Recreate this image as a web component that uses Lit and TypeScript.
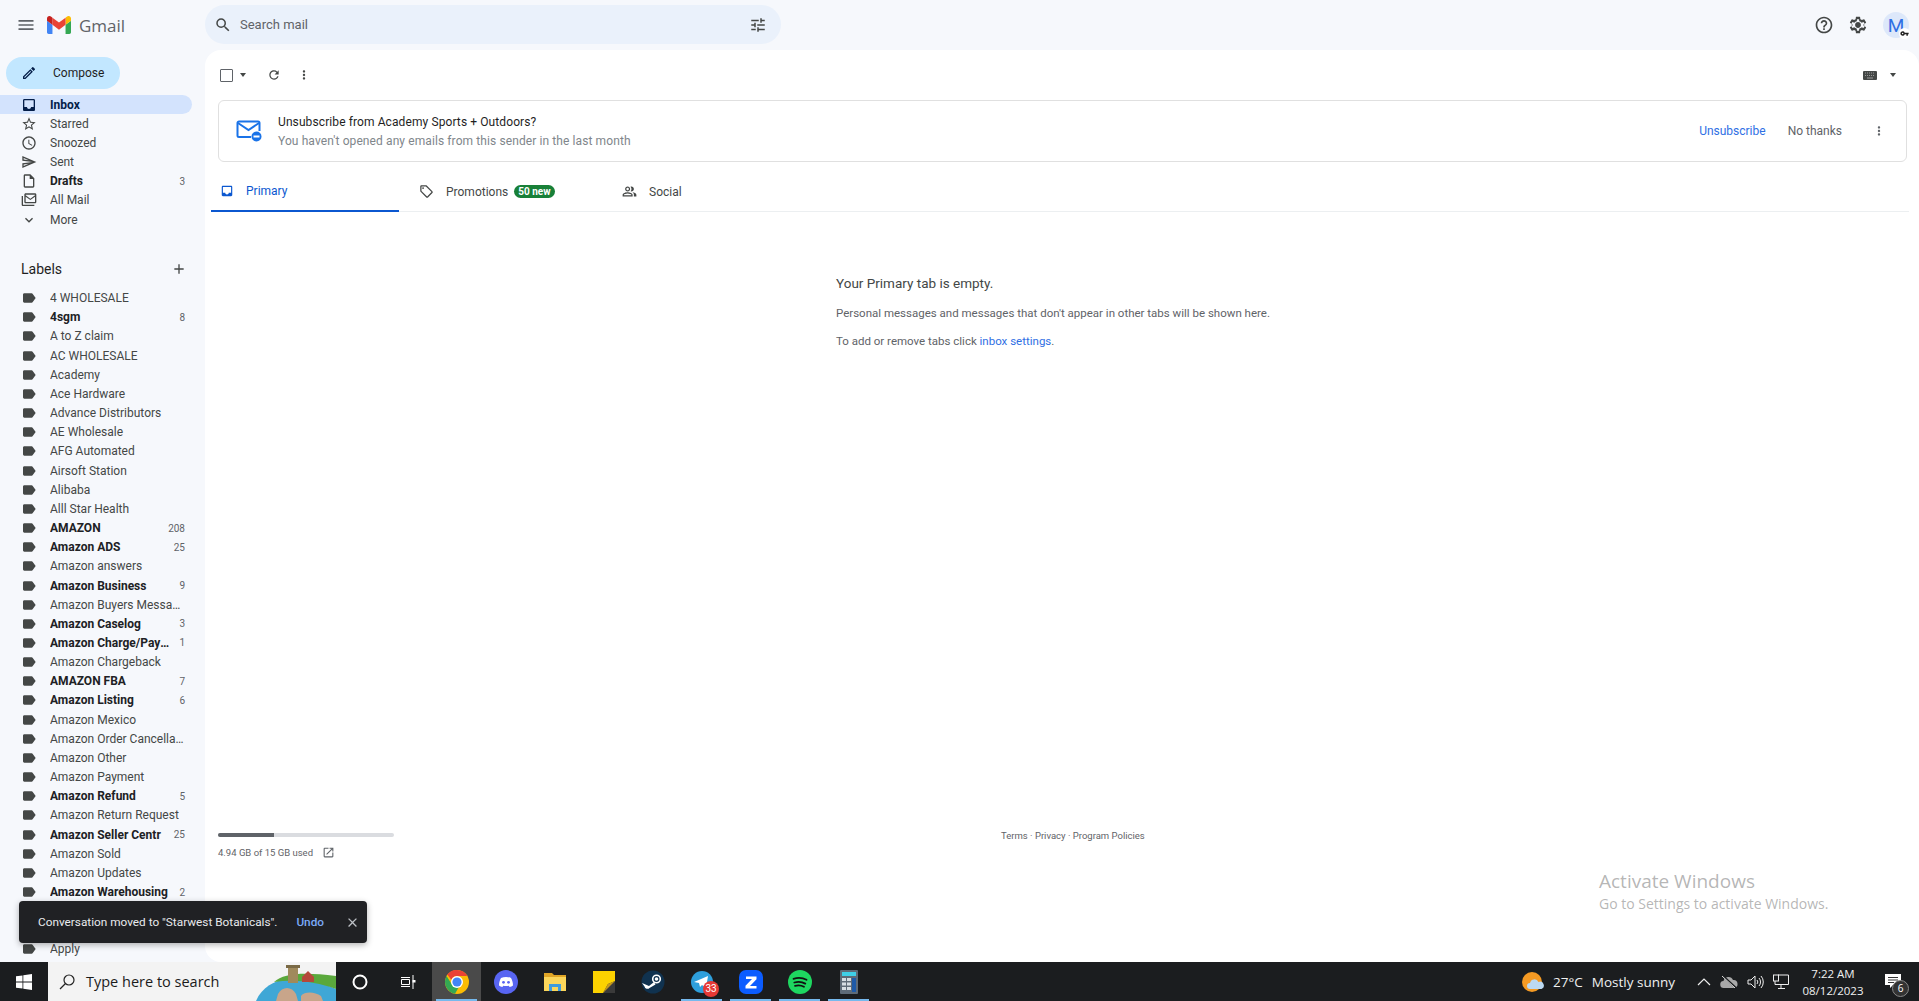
import { LitElement, html, css, svg } from 'lit';
import { customElement } from 'lit/decorators.js';

const icon = (d: string, size = 16, fill = '#444746') => html`<svg width=${size} height=${size} viewBox="0 0 24 24" fill=${fill}><path d=${d}></path></svg>`;

const P = {
  menu: 'M3 18h18v-2H3v2zm0-5h18v-2H3v2zm0-7v2h18V6H3z',
  search: 'M15.5 14h-.79l-.28-.27A6.47 6.47 0 0 0 16 9.5 6.5 6.5 0 1 0 9.5 16c1.61 0 3.09-.59 4.23-1.57l.27.28v.79l5 4.99L20.49 19l-4.99-5zm-6 0C7.01 14 5 11.99 5 9.5S7.01 5 9.5 5 14 7.01 14 9.5 11.99 14 9.5 14z',
  tune: 'M3 17v2h6v-2H3zM3 5v2h10V5H3zm10 16v-2h8v-2h-8v-2h-2v6h2zM7 9v2H3v2h4v2h2V9H7zm14 4v-2H11v2h10zm-6-4h2V7h4V5h-4V3h-2v6z',
  help: 'M11 18h2v-2h-2v2zm1-16C6.48 2 2 6.48 2 12s4.48 10 10 10 10-4.48 10-10S17.52 2 12 2zm0 18c-4.41 0-8-3.59-8-8s3.59-8 8-8 8 3.59 8 8-3.59 8-8 8zm0-14c-2.21 0-4 1.79-4 4h2c0-1.1.9-2 2-2s2 .9 2 2c0 2-3 1.75-3 5h2c0-2.25 3-2.5 3-5 0-2.21-1.79-4-4-4z',
  gear: 'M19.43 12.98c.04-.32.07-.64.07-.98s-.03-.66-.07-.98l2.11-1.65c.19-.15.24-.42.12-.64l-2-3.46c-.12-.22-.39-.3-.61-.22l-2.49 1c-.52-.4-1.08-.73-1.69-.98l-.38-2.65A.488.488 0 0 0 14 2h-4c-.25 0-.46.18-.49.42l-.38 2.65c-.61.25-1.17.59-1.69.98l-2.49-1c-.23-.09-.49 0-.61.22l-2 3.46c-.13.22-.07.49.12.64l2.11 1.65c-.04.32-.07.65-.07.98s.03.66.07.98l-2.11 1.65c-.19.15-.24.42-.12.64l2 3.46c.12.22.39.3.61.22l2.49-1c.52.4 1.08.73 1.69.98l.38 2.65c.03.24.24.42.49.42h4c.25 0 .46-.18.49-.42l.38-2.65c.61-.25 1.17-.59 1.69-.98l2.49 1c.23.09.49 0 .61-.22l2-3.46c.12-.22.07-.49-.12-.64l-2.11-1.65zM12 15.5c-1.93 0-3.5-1.57-3.5-3.5s1.57-3.5 3.5-3.5 3.5 1.57 3.5 3.5-1.57 3.5-3.5 3.5zM18 12l1.9 1.5-1.2 2.1-2.3-.9c-1 .9-1.6 1.2-2.9 1.7l-.3 2.4h-2.4l-.3-2.4c-1.3-.5-1.9-.8-2.9-1.7l-2.3.9-1.2-2.1L6 12l-1.9-1.5 1.2-2.1 2.3.9c1-.9 1.6-1.2 2.9-1.7l.3-2.4h2.4l.3 2.4c1.3.5 1.9.8 2.9 1.7l2.3-.9 1.2 2.1L18 12z',
  pencil: 'M3 17.25V21h3.75L17.81 9.94l-3.75-3.75L3 17.25zM5.92 19H5v-.92l9.06-9.06.92.92L5.92 19zM20.71 7.04a1 1 0 0 0 0-1.41l-2.34-2.34a1 1 0 0 0-1.41 0l-1.83 1.83 3.75 3.75 1.83-1.83z',
  inbox: 'M19 3H4.99c-1.11 0-1.98.89-1.98 2L3 19c0 1.1.88 2 1.99 2H19c1.1 0 2-.9 2-2V5c0-1.11-.9-2-2-2zm0 12h-4c0 1.66-1.35 3-3 3s-3-1.34-3-3H4.99V5H19v10z',
  star: 'M22 9.24l-7.19-.62L12 2 9.19 8.63 2 9.24l5.46 4.73L5.82 21 12 17.27 18.18 21l-1.63-7.03L22 9.24zM12 15.4l-3.76 2.27 1-4.28-3.32-2.88 4.38-.38L12 6.1l1.71 4.04 4.38.38-3.32 2.88 1 4.28L12 15.4z',
  clock: 'M11.99 2C6.47 2 2 6.48 2 12s4.47 10 9.99 10C17.52 22 22 17.52 22 12S17.52 2 11.99 2zM12 20c-4.42 0-8-3.58-8-8s3.58-8 8-8 8 3.58 8 8-3.58 8-8 8zm.5-13H11v6l5.25 3.15.75-1.23-4.5-2.67V7z',
  sent: 'M4.01 6.03l7.51 3.22-7.52-1 .01-2.22m7.5 8.72L4 17.97v-2.22l7.51-1M2.01 3L2 10l15 2-15 2 .01 7L23 12 2.01 3z',
  draft: 'M14 2H6c-1.1 0-1.99.9-1.99 2L4 20c0 1.1.89 2 1.99 2H18c1.1 0 2-.9 2-2V8l-6-6zM6 20V4h7v5h5v11H6z',
  allMail: 'M3 6H1v13c0 1.1.9 2 2 2h17v-2H3V6zm18-4H7c-1.1 0-2 .9-2 2v11c0 1.1.9 2 2 2h14c1.1 0 2-.9 2-2V4c0-1.1-.9-2-2-2zm0 13H7V7l7 5 7-5v8zm-7-5L7 5V4h14v1l-7 5z',
  chevron: 'M7.41 8.59L12 13.17l4.59-4.58L18 10l-6 6-6-6z',
  plus: 'M19 13h-6v6h-2v-6H5v-2h6V5h2v6h6v2z',
  label: 'M17.63 5.84C17.27 5.33 16.67 5 16 5L5 5.01C3.9 5.01 3 5.9 3 7v10c0 1.1.9 1.99 2 1.99L16 19c.67 0 1.27-.33 1.63-.84L22 12l-4.37-6.16z',
  refresh: 'M17.65 6.35A7.958 7.958 0 0 0 12 4c-4.42 0-7.99 3.58-7.99 8s3.57 8 7.99 8c3.73 0 6.84-2.55 7.73-6h-2.08A5.99 5.99 0 0 1 12 18c-3.31 0-6-2.69-6-6s2.69-6 6-6c1.66 0 3.14.69 4.22 1.78L13 11h7V4l-2.35 2.35z',
  dots: 'M12 8c1.1 0 2-.9 2-2s-.9-2-2-2-2 .9-2 2 .9 2 2 2zm0 2c-1.1 0-2 .9-2 2s.9 2 2 2 2-.9 2-2-.9-2-2-2zm0 6c-1.1 0-2 .9-2 2s.9 2 2 2 2-.9 2-2-.9-2-2-2z',
  tag: 'M21.41 11.58l-9-9C12.05 2.22 11.55 2 11 2H4c-1.1 0-2 .9-2 2v7c0 .55.22 1.05.59 1.42l9 9c.36.36.86.58 1.41.58s1.05-.22 1.41-.59l7-7c.37-.36.59-.86.59-1.41s-.23-1.06-.59-1.42zM13 20.01L4 11V4h7v-.01l9 9-7 7.02zM6.5 5A1.5 1.5 0 1 0 6.5 8 1.5 1.5 0 0 0 6.5 5z',
  people: 'M16.67 13.13C18.04 14.06 19 15.32 19 17v3h4v-3c0-2.18-3.57-3.47-6.33-3.87zM15 12c2.21 0 4-1.79 4-4s-1.79-4-4-4c-.47 0-.91.1-1.33.24a5.98 5.98 0 0 1 0 7.52c.42.14.86.24 1.33.24zM9 12c2.21 0 4-1.79 4-4s-1.79-4-4-4-4 1.79-4 4 1.79 4 4 4zm0-6c1.1 0 2 .9 2 2s-.9 2-2 2-2-.9-2-2 .9-2 2-2zm0 7c-2.67 0-8 1.34-8 4v3h16v-3c0-2.66-5.33-4-8-4zm6 5H3v-.99C3.2 16.29 6.3 15 9 15s5.8 1.29 6 2v1z',
  open: 'M19 19H5V5h7V3H5a2 2 0 0 0-2 2v14a2 2 0 0 0 2 2h14c1.1 0 2-.9 2-2v-7h-2v7zM14 3v2h3.59l-9.83 9.83 1.41 1.41L19 6.41V10h2V3h-7z',
  close: 'M19 6.41L17.59 5 12 10.59 6.41 5 5 6.41 10.59 12 5 17.59 6.41 19 12 13.41 17.59 19 19 17.59 13.41 12z',
};

const NAV = [
  { name: 'Inbox', d: P.inbox, active: true },
  { name: 'Starred', d: P.star },
  { name: 'Snoozed', d: P.clock },
  { name: 'Sent', d: P.sent },
  { name: 'Drafts', d: P.draft, bold: true, count: '3' },
  { name: 'All Mail', d: P.allMail },
  { name: 'More', d: P.chevron },
];

// bold = has unread count
const LABELS: [string, string?][] = [
  ['4 WHOLESALE'], ['4sgm', '8'], ['A to Z claim'], ['AC WHOLESALE'], ['Academy'], ['Ace Hardware'],
  ['Advance Distributors'], ['AE Wholesale'], ['AFG Automated'], ['Airsoft Station'], ['Alibaba'],
  ['Alll Star Health'], ['AMAZON', '208'], ['Amazon ADS', '25'], ['Amazon answers'], ['Amazon Business', '9'],
  ['Amazon Buyers Messages'], ['Amazon Caselog', '3'], ['Amazon Charge/Payment', '1'], ['Amazon Chargeback'],
  ['AMAZON FBA', '7'], ['Amazon Listing', '6'], ['Amazon Mexico'], ['Amazon Order Cancellations'],
  ['Amazon Other'], ['Amazon Payment'], ['Amazon Refund', '5'], ['Amazon Return Request'],
  ['Amazon Seller Centr', '25'], ['Amazon Sold'], ['Amazon Updates'], ['Amazon Warehousing', '2'],
  ['AMZ FBA reinbursment'], ['Anker'], ['Apply'], ['Aqua'],
];

const TASK_ICONS = [
  { active: true, running: true, art: svg`<circle cx="12" cy="12" r="12" fill="#fbbc04"/><path d="M12 0a12 12 0 0 1 10.4 6H12a6 6 0 0 0-5.6 3.8L2.2 4.6A12 12 0 0 1 12 0z" fill="#ea4335"/><path d="M1.6 6A12 12 0 0 0 10 23.8l4-7a6 6 0 0 1-7.6-3z" fill="#34a853"/><circle cx="12" cy="12" r="6" fill="#fff"/><circle cx="12" cy="12" r="4.6" fill="#4285f4"/>` },
  { art: svg`<circle cx="12" cy="12" r="12" fill="#5865f2"/><path d="M7 8c3-1.4 7-1.4 10 0 1.400 2.400 2 5 2 7.500-1 .8-2.200 1.300-3.400 1.500l-.8-1.300c-2 .5-3.600.5-5.600 0l-.8 1.300C7.200 16.800 6 16.300 5 15.500 5 13 5.600 10.400 7 8z" fill="#fff"/><circle cx="9.500" cy="12.300" r="1.400" fill="#5865f2"/><circle cx="14.500" cy="12.300" r="1.400" fill="#5865f2"/>` },
  { art: svg`<path d="M1 3h8l2 2h12v15H1z" fill="#e0a526"/><path d="M1 7h22v14H1z" fill="#fbd65b"/><path d="M6 21v-7h12v7h-3v-4H9v4z" fill="#3f9bdc"/>` },
  { art: svg`<rect x="1" y="1" width="22" height="22" fill="#fcd200"/><path d="M23 11v12H11l5-9z" fill="#3a3a3a"/><path d="M23 11l-7 3-5 9z" fill="#c79a1a"/>` },
  { art: svg`<circle cx="12" cy="12" r="11.500" fill="#10324f"/><circle cx="15.500" cy="9" r="3.800" fill="none" stroke="#fff" stroke-width="1.600"/><circle cx="15.500" cy="9" r="1.800" fill="#fff"/><path d="M1 13l7 3 5-4 1.500 2.500-6 3.500a3 3 0 0 1-5-1.500z" fill="#fff"/>` },
  { running: true, badge: '33', art: svg`<circle cx="12" cy="12" r="11" fill="#2e9fdc"/><path d="M4 12l14-6-2 12-4-3-2 2-1-4z" fill="#fff"/>` },
  { running: true, art: svg`<rect width="24" height="24" rx="7" fill="#0b5cff"/><path d="M7 6.500h10.500v2.800l-6.500 6.600h6.500v2.600H6.500v-2.800L13 9.100H7z" fill="#fff"/>` },
  { running: true, art: svg`<circle cx="12" cy="12" r="12" fill="#1ed760"/><path d="M5.500 8.800c4.500-1.300 9.200-1 13 1M6.300 12.500c3.800-1 7.800-.7 11 1.100M7 15.800c3-.8 6.300-.6 9 1" fill="none" stroke="#111" stroke-width="1.800" stroke-linecap="round"/>` },
  { running: true, art: svg`<rect x="3" y="0" width="18" height="24" rx="1" fill="#5e6b78"/><rect x="5" y="2" width="14" height="4" fill="#3fd0e8"/><path d="M5 8h4v3H5zM10 8h4v3h-4zM5 12.500h4v3H5zM10 12.500h4v3h-4zM5 17h4v3H5zM10 17h4v3h-4z" fill="#d5dde3"/><rect x="15" y="8" width="4" height="14" fill="#1e5aa8"/>` },
];

@customElement('app-root')
export class AppRoot extends LitElement {
  static styles = css`
    :host {
      display: block;
      width: 1919px;
      height: 1001px;
      overflow: hidden;
      position: relative;
      font-family: Roboto, 'Noto Sans', sans-serif;
      font-size: 12px;
      color: #444746;
      background: #f6f8fc;
    }
    svg { display: block; flex: none; }
    .gmail { height: 962px; display: flex; flex-direction: column; }
    .topbar { height: 50px; flex: none; display: flex; align-items: center; }
    .brand { width: 205px; flex: none; display: flex; align-items: center; padding-left: 16px; box-sizing: border-box; }
    .logo { margin-left: 11px; }
    .word { margin-left: 8px; font-family: 'Open Sans', sans-serif; font-size: 17px; color: #5f6368; }
    .search { width: 576px; height: 39px; margin-top: -1px; background: #eaf1fb; border-radius: 20px; display: flex; align-items: center; padding: 0 14px 0 9px; box-sizing: border-box; font-size: 13px; color: #5f6368; gap: 8px; }
    .search span { flex: 1; }
    .right { margin-left: auto; display: flex; align-items: center; padding-right: 10px; }
    .right svg + svg { margin-left: 14px; }
    .avatar { margin-left: 15px; width: 26px; height: 26px; border-radius: 50%; background: #dde8fa; color: #2f6fe4; font-size: 19px; display: flex; align-items: center; justify-content: center; position: relative; }
    .key { position: absolute; right: -1px; bottom: -1px; width: 11px; height: 11px; border-radius: 50%; background: #fff; display: flex; align-items: center; justify-content: center; }
    .body { flex: 1; display: flex; min-height: 0; }
    .side { width: 205px; flex: none; overflow: hidden; }
    .compose { margin: 7px 0 6px 6px; width: 114px; height: 32px; border-radius: 16px; background: #c2e7ff; color: #1f1f1f; display: flex; align-items: center; gap: 16px; padding-left: 15px; box-sizing: border-box; }
    .row { height: 19.17px; display: flex; align-items: center; padding: 0 7px 0 21px; width: 192px; box-sizing: border-box; border-radius: 0 10px 10px 0; color: #444746; }
    .row .name { margin-left: 13px; flex: 1; white-space: nowrap; overflow: hidden; text-overflow: ellipsis; }
    .row .count { font-size: 10px; margin-left: 6px; color: #5f6368; }
    .row.active { background: #d3e3fd; color: #041e49; font-weight: 700; }
    .row.bold .name { font-weight: 700; color: #202124; }
    .labels-head { margin-top: 21px; height: 38.5px; display: flex; align-items: center; justify-content: space-between; padding: 0 18px 0 21px; font-size: 14px; color: #1f1f1f; }
    .main { flex: 1; min-width: 0; background: #fff; border-radius: 16px 16px 0 16px; display: flex; flex-direction: column; }
    .tools { height: 50px; flex: none; display: flex; align-items: center; padding: 0 13px; box-sizing: border-box; }
    .check { width: 11px; height: 11px; border: 1.500px solid #5f6368; border-radius: 1px; margin-left: 2px; }
    .caret { width: 0; height: 0; border: 3.500px solid transparent; border-top: 4px solid #444746; border-bottom: 0; }
    .tools .caret { margin-left: 7px; }
    .tools .refresh { margin-left: 21px; }
    .tools .dots { margin-left: 16px; }
    .kbd { margin-left: auto; display: flex; align-items: center; gap: 6px; padding-right: 10px; }
    .banner { height: 62px; flex: none; margin: 0 12px 0 13px; border: 1px solid #e0e0e0; border-radius: 6px; display: flex; align-items: center; box-sizing: border-box; padding: 0 20px 0 17px; }
    .banner .txt { margin-left: 16px; flex: 1; }
    .banner .title { color: #1f1f1f; letter-spacing: .1px; }
    .banner .sub { color: #80868b; margin-top: 5px; letter-spacing: .1px; }
    .link { color: #2f6fe4; }
    .nothanks { margin-left: 22px; color: #5f6368; }
    .banner .more { margin-left: 30px; }
    .tabs { height: 40px; flex: none; margin: 10px 10px 0 6px; display: flex; border-bottom: 1px solid #eceff1; box-sizing: border-box; }
    .tab { width: 202px; display: flex; align-items: center; padding-left: 9px; gap: 12px; box-sizing: border-box; color: #444746; }
    .tab.on { width: 188px; margin-right: 14px; color: #0b57d0; border-bottom: 2px solid #0b57d0; height: 40px; }
    .tab.mid { padding-left: 8px; margin-left: -2px; }
    .pill { margin-left: -6px; background: #188038; color: #fff; font-size: 10px; font-weight: 700; border-radius: 8px; padding: 0 4px; line-height: 13px; }
    .empty { margin-left: 631px; margin-top: 63px; color: #5f6368; font-size: 11.500px; height: 558px; flex: none; }
    .empty h2 { margin: 0 0 15px; font-size: 13.500px; font-weight: 400; color: #444746; line-height: 16px; }
    .empty p { margin: 0 0 14px; line-height: 14px; }
    .foot { display: flex; padding-left: 13px; position: relative; }
    .storage { width: 176px; font-size: 9.500px; color: #5f6368; }
    .bar { height: 4px; border-radius: 2px; background: #dadce0; overflow: hidden; }
    .bar div { height: 100%; background: #5f6368; }
    .used { display: flex; align-items: center; gap: 9px; margin-top: 9px; }
    .terms { margin-left: 607px; margin-top: -3px; font-size: 9.500px; color: #5f6368; }
    .toast { position: absolute; left: 19px; top: 901px; width: 348px; height: 42px; background: #202124; border-radius: 4px; color: #e8eaed; display: flex; align-items: center; padding-left: 19px; box-sizing: border-box; box-shadow: 0 2px 6px rgba(0,0,0,.3); font-size: 11.800px; }
    .toast .undo { margin-left: 19px; color: #7baaf7; font-weight: 500; }
    .toast svg { margin-left: 21px; }
    .activate { position: absolute; left: 1599px; top: 868px; color: rgba(120,120,120,.55); font-family: 'Open Sans', sans-serif; font-size: 14px; line-height: 20px; }
    .activate b { display: block; font-weight: 400; font-size: 19px; line-height: 26px; }
    .task { height: 39px; background: #1b1d1f; display: flex; align-items: stretch; color: #fff; }
    .start { width: 48px; display: flex; align-items: center; justify-content: center; }
    .tsearch { width: 288px; background: #f3f3f3; display: flex; align-items: center; font-family: 'Open Sans', sans-serif; font-size: 14.500px; color: #1b1b1b; padding-left: 10px; box-sizing: border-box; gap: 10px; overflow: hidden; }
    .tsearch span { flex: 1; white-space: nowrap; }
    .cell { width: 49px; display: flex; align-items: center; justify-content: center; position: relative; flex: none; box-sizing: border-box; }
    .cell.first { width: 48px; }
    .cell.on { background: #4a4a4a; }
    .cell.run::after { content: ''; position: absolute; left: 4px; right: 4px; bottom: 0; height: 2px; background: #76b9ed; }
    .badge { position: absolute; left: 26px; top: 19px; width: 16px; height: 16px; border-radius: 50%; background: #e53935; color: #fff; font-size: 10px; line-height: 16px; text-align: center; }
    .tray { margin-left: auto; display: flex; align-items: center; font-family: 'Open Sans', sans-serif; font-size: 13.500px; color: #f0f0f0; }
    .tray .temp { margin-left: 9px; }
    .tray .wx { margin-left: 9px; margin-right: 22px; }
    .tray .sys { margin-right: 9px; }
    .clock { width: 68px; margin-left: 10px; text-align: center; font-size: 11.500px; line-height: 17px; }
    .note { position: relative; margin: 0 18px 0 18px; width: 16px; height: 16px; }
    .note i { position: absolute; left: 7px; top: 6px; width: 15px; height: 15px; border-radius: 50%; background: #333; border: 1px solid #888; color: #fff; font-size: 10px; font-style: normal; line-height: 15px; text-align: center; }
  `;

  render() {
    return html`
      <div class="gmail">
        <header class="topbar">
          <div class="brand">
            ${icon(P.menu, 20, '#5f6368')}
            <svg class="logo" width="24" height="18" viewBox="52 42 88 66">
              <path fill="#4285f4" d="M58 108h14V74L52 59v43c0 3.32 2.69 6 6 6"></path>
              <path fill="#34a853" d="M120 108h14c3.32 0 6-2.69 6-6V59l-20 15"></path>
              <path fill="#fbbc04" d="M120 48v26l20-15v-8c0-7.42-8.47-11.65-14.4-7.2"></path>
              <path fill="#ea4335" d="M72 74V48l24 18 24-18v26L96 92"></path>
              <path fill="#c5221f" d="M52 51v8l20 15V48l-5.6-4.2c-5.94-4.45-14.4-.22-14.4 7.2"></path>
            </svg>
            <span class="word">Gmail</span>
          </div>
          <div class="search">
            ${icon(P.search, 18, '#444746')}
            <span>Search mail</span>
            ${icon(P.tune, 18, '#444746')}
          </div>
          <div class="right">
            ${icon(P.help, 20, '#444746')}
            ${icon(P.gear, 20, '#444746')}
            <div class="avatar">M
              <span class="key"><svg width="9" height="9" viewBox="0 0 24 24" fill="#222"><path d="M12.650 10A6 6 0 1 0 12.650 14H17v4h4v-4h2v-4H12.650zM7 14a2 2 0 1 1 0-4 2 2 0 0 1 0 4z"></path></svg></span>
            </div>
          </div>
        </header>
        <div class="body">
          <nav class="side">
            <div class="compose">${icon(P.pencil, 16, '#041e49')}<span>Compose</span></div>
            ${NAV.map((n) => html`
              <div class="row ${n.active ? 'active' : ''} ${n.bold ? 'bold' : ''}">
                ${icon(n.d, 16, n.active ? '#041e49' : '#444746')}
                <span class="name">${n.name}</span>
                ${n.count ? html`<span class="count">${n.count}</span>` : ''}
              </div>`)}
            <div class="labels-head"><span>Labels</span>${icon(P.plus, 16, '#444746')}</div>
            ${LABELS.map(([name, count]) => html`
              <div class="row ${count ? 'bold' : ''}">
                ${icon(P.label, 16)}
                <span class="name">${name}</span>
                ${count ? html`<span class="count">${count}</span>` : ''}
              </div>`)}
          </nav>
          <main class="main">
            <div class="tools">
              <div class="check"></div>
              <div class="caret"></div>
              <span class="refresh">${icon(P.refresh, 14, '#444746')}</span>
              <span class="dots">${icon(P.dots, 14, '#444746')}</span>
              <div class="kbd">
                <svg width="14" height="9" viewBox="0 0 14 9"><rect width="14" height="9" rx="1" fill="#444746"></rect><path d="M2 2h10M2 4.500h10" stroke="#999" stroke-dasharray="1 1"></path><path d="M4 7h6" stroke="#999"></path></svg>
                <div class="caret"></div>
              </div>
            </div>
            <section class="banner">
              <svg width="26" height="22" viewBox="0 0 26 22">
                <path d="M15 17H3a1.500 1.500 0 0 1-1.500-1.500V3A1.500 1.500 0 0 1 3 1.500h19A1.500 1.500 0 0 1 23.500 3v8" fill="none" stroke="#1a73e8" stroke-width="2"></path>
                <path d="M2 3l10.500 7L23 3" fill="none" stroke="#1a73e8" stroke-width="2"></path>
                <circle cx="20.500" cy="16.500" r="5" fill="#1a73e8"></circle>
                <rect x="17.500" y="15.500" width="6" height="2" fill="#fff"></rect>
              </svg>
              <div class="txt">
                <div class="title">Unsubscribe from Academy Sports + Outdoors?</div>
                <div class="sub">You haven't opened any emails from this sender in the last month</div>
              </div>
              <span class="link">Unsubscribe</span>
              <span class="nothanks">No thanks</span>
              <span class="more">${icon(P.dots, 14, '#5f6368')}</span>
            </section>
            <div class="tabs">
              <div class="tab on">${icon(P.inbox, 14, '#0b57d0')}<span>Primary</span></div>
              <div class="tab mid">${icon(P.tag, 15)}<span>Promotions</span><span class="pill">50 new</span></div>
              <div class="tab">${icon(P.people, 15)}<span>Social</span></div>
            </div>
            <div class="empty">
              <h2>Your Primary tab is empty.</h2>
              <p>Personal messages and messages that don't appear in other tabs will be shown here.</p>
              <p>To add or remove tabs click <span class="link">inbox settings</span>.</p>
            </div>
            <div class="foot">
              <div class="storage">
                <div class="bar"><div style="width:32%"></div></div>
                <div class="used"><span>4.94 GB of 15 GB used</span>${icon(P.open, 13, '#5f6368')}</div>
              </div>
              <div class="terms">Terms · Privacy · Program Policies</div>
            </div>
          </main>
        </div>
      </div>
      <div class="toast">
        <span>Conversation moved to "Starwest Botanicals".</span>
        <span class="undo">Undo</span>
        ${icon(P.close, 15, '#bdc1c6')}
      </div>
      <div class="activate"><b>Activate Windows</b>Go to Settings to activate Windows.</div>
      <footer class="task">
        <div class="start">
          <svg width="16" height="16" viewBox="0 0 16 16" fill="#fff"><path d="M0 2.300l6.500-.9v6.200H0zM7.300 1.300L16 0v7.600H7.300zM0 8.400h6.500v6.200L0 13.700zM7.300 8.400H16V16l-8.700-1.200z"></path></svg>
        </div>
        <div class="tsearch">
          <svg width="18" height="18" viewBox="0 0 18 18" fill="none" stroke="#222" stroke-width="1.200"><circle cx="11" cy="7" r="5"></circle><path d="M7.500 10.500L2 16"></path></svg>
          <span>Type here to search</span>
          <svg width="80" height="39" viewBox="0 0 80 39" style="margin-right:0">
            <path d="M0 39c6-14 18-20 30-22 18-3 36 4 50 10v12z" fill="#3fa7d6"></path>
            <path d="M18 20c10-9 30-10 62-6v13C60 20 40 17 18 20z" fill="#5aa83c"></path>
            <path d="M22 32c4-8 14-8 18 0l2 7H20zM45 34c4-5 14-4 20 0l2 5H45z" fill="#c8a58a"></path>
            <rect x="32" y="5" width="10" height="16" fill="#a08a5c"></rect>
            <rect x="30" y="3" width="14" height="3" fill="#7a6a46"></rect>
            <path d="M46 15l6-6 6 6v5H46z" fill="#b5483a"></path>
          </svg>
        </div>
        <div class="cell first"><svg width="16" height="16" viewBox="0 0 16 16" fill="none" stroke="#fff" stroke-width="2"><circle cx="8" cy="8" r="6.500"></circle></svg></div>
        <div class="cell first">
          <svg width="16" height="16" viewBox="0 0 16 16" fill="none" stroke="#fff"><path d="M1 3.500h9M1 12.500h9M1.500 5.500h8v5h-8zM13 1v14"></path><rect x="12.500" y="6" width="3" height="2.500" fill="#fff" stroke="none"></rect></svg>
        </div>
        ${TASK_ICONS.map((t) => html`
          <div class="cell ${t.active ? 'on' : ''} ${t.running ? 'run' : ''}">
            <svg width="24" height="24" viewBox="0 0 24 24">${t.art}</svg>
            ${t.badge ? html`<span class="badge">${t.badge}</span>` : ''}
          </div>`)}
        <div class="tray">
          <svg width="22" height="22" viewBox="0 0 22 22"><circle cx="10" cy="11" r="10" fill="#f59a23"></circle><path d="M8 18a3 3 0 0 1 0-6 4.500 4.500 0 0 1 8.500-1 3.500 3.500 0 0 1 3 7z" fill="#bcd9f2"></path></svg>
          <span class="temp">27°C</span>
          <span class="wx">Mostly sunny</span>
          <svg class="sys" width="14" height="14" viewBox="0 0 14 14" fill="none" stroke="#eee" stroke-width="1.200"><path d="M1 10l6-6 6 6"></path></svg>
          <svg class="sys" width="18" height="14" viewBox="0 0 18 14"><path d="M4 13a3.500 3.500 0 0 1-.5-7 5 5 0 0 1 9.500-1 4 4 0 0 1 1 8z" fill="#a8a8a8"></path><path d="M3 1l13 12" stroke="#1b1d1f" stroke-width="2"></path><path d="M2 1l13 12" stroke="#ddd"></path></svg>
          <svg class="sys" width="17" height="14" viewBox="0 0 17 14" fill="none" stroke="#eee"><path d="M1 5h3l4-4v12l-4-4H1zM10 5a3 3 0 0 1 0 4M12 3a6 6 0 0 1 0 8M14 1a9 9 0 0 1 0 12"></path></svg>
          <svg width="16" height="15" viewBox="0 0 16 15" fill="none" stroke="#eee"><path d="M5 1h10.500v9.500H2V7M8 10.500V14M5 14.500h7"></path><rect x=".5" y="1" width="5" height="6"></rect></svg>
          <div class="clock">7:22 AM<br />08/12/2023</div>
          <div class="note">
            <svg width="16" height="14" viewBox="0 0 16 14"><path d="M0 0h16v11H8l-3 3v-3H0z" fill="#fff"></path><path d="M3 3.500h10M3 6h10M3 8.500h6" stroke="#333"></path></svg>
            <i>6</i>
          </div>
        </div>
      </footer>
    `;
  }
}
